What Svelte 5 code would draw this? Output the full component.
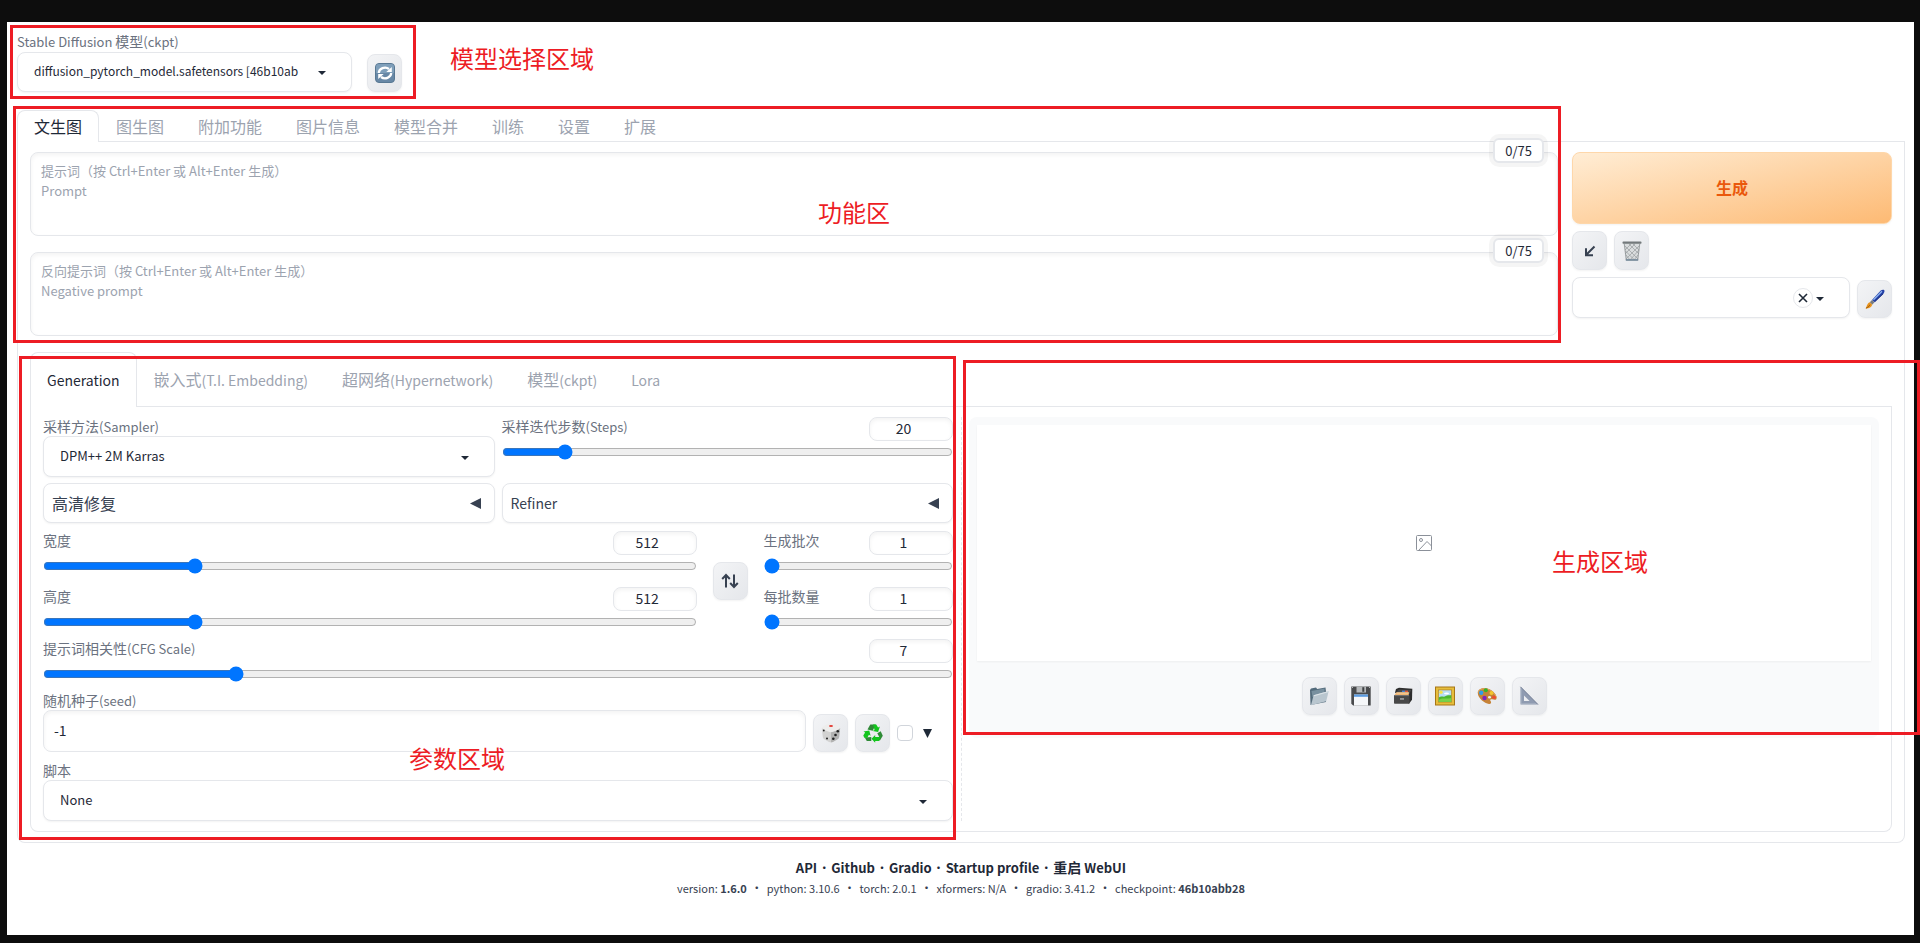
<script>
    let { version = '1.6.0' } = $props();

    let mainTab = $state('文生图');
    let subTab = $state('Generation');
    let steps = $state(20);
    let width = $state(512);
    let height = $state(512);
    let batchCount = $state(1);
    let batchSize = $state(1);
    let cfg = $state(7);
    let seed = $state('-1');

    const mainTabs = ['文生图', '图生图', '附加功能', '图片信息', '模型合并', '训练', '设置', '扩展'];
    const subTabs = ['Generation', '嵌入式(T.I. Embedding)', '超网络(Hypernetwork)', '模型(ckpt)', 'Lora'];
    const outputTools = ['folder', 'floppy', 'cardbox', 'frame', 'palette', 'ruler'];
    const links = ['API', 'Github', 'Gradio', 'Startup profile', '重启 WebUI'];
    const prompts = [
        { id: 'prompt', text: '提示词（按 Ctrl+Enter 或 Alt+Enter 生成）\nPrompt' },
        { id: 'negative', text: '反向提示词（按 Ctrl+Enter 或 Alt+Enter 生成）\nNegative prompt' }
    ];

    // latin letters run large next to the hanzi, so they get their own size
    function runs(text) {
        return text.match(/[ -~]+|[^ -~]+/g);
    }

    function swapSize() {
        [width, height] = [height, width];
    }
</script>

{#snippet mixed(text)}{#each runs(text) as run}<span class:latin={/[ -~]/.test(run)}>{run}</span>{/each}{/snippet}

{#snippet caret()}
    <svg class="caret" viewBox="0 0 18 18" aria-hidden="true"><path d="M5 8l4 4 4-4z" /></svg>
{/snippet}

{#snippet icon(name)}
    <svg class="icon" viewBox="0 0 20 20" aria-hidden="true">
        {#if name === 'refresh'}
            <rect x="0.5" y="0.5" width="19" height="19" rx="3.5" fill="#6888a6" stroke="#587893" />
            <path d="M1 10V4a3 3 0 0 1 3-3h12a3 3 0 0 1 3 3v6z" fill="#7f9fba" />
            <path d="M3.8 10A6.200 5.500 0 0 1 14 6" fill="none" stroke="#fff" stroke-width="2.300" />
            <path d="M16.200 10A6.200 5.500 0 0 1 6 14" fill="none" stroke="#fff" stroke-width="2.300" />
            <path d="M16.800 4v5h-5.500zM3.200 16v-5h5.500z" fill="#fff" />
        {:else if name === 'arrow'}
            <path d="M14.5 5.5L6 14M6 7.2V14.2h7" fill="none" stroke="#374151" stroke-width="2" />
        {:else if name === 'trash'}
            <path d="M1.5 2h17l-2.3 17.5H3.8z" fill="#d9dcdd" />
            <path d="M3 5l13 13M7 3l10 10M11 3l6 6M3.5 10l9 9M4 14l4 5M17 5L4 18M13 3L3 13M9 3L3 9M17 9l-9 10M16 14l-4 5" stroke="#969b9d" stroke-width="0.7" />
            <path d="M2.3 3l2 16h11.4l2-16" fill="none" stroke="#8b9193" stroke-width="0.8" />
            <rect x="0.5" y="0.5" width="19" height="2.2" rx="0.8" fill="#73797b" />
            <path d="M3.8 18.2h12.4v1.5H3.8z" fill="#71889b" />
        {:else if name === 'brush'}
            <path d="M7 11L15.5 1.8c1.5-1.4 4-1.6 4 0.2 0 1.3-1 2.8-2 3.8L9.5 13.3z" fill="#2441a8" />
            <path d="M8.5 10.8L17 2.3" stroke="#8fb3f0" stroke-width="1.3" />
            <path d="M10 12.5l8-7.7" stroke="#14246b" stroke-width="0.8" />
            <path d="M4.8 13.3L7 11l2.5 2.3-2.3 2.5z" fill="#777b80" />
            <path d="M4.8 13.3l2.4 2.5c-.4 2.5-3.4 3.8-6.7 3.6 1.4-1 1.2-5 4.3-6.1z" fill="#e8931c" />
            <path d="M1 19.2c2-.8 3-2 4-3.5" stroke="#8a4b06" stroke-width="0.8" fill="none" />
        {:else if name === 'swap'}
            <path d="M6 16.5V4M2.2 8L6 4l3.8 4M14 3.5V16M10.2 12l3.8 4 3.8-4" fill="none" stroke="#374151" stroke-width="2" />
        {:else if name === 'dice'}
            <path d="M0.800 5L10 9v10.500L8 19l-5.500-3.300L1.800 14z" fill="#d2d2d1" />
            <path d="M19.200 5L10 9v10.500l2-.5 5.500-3.300.7-1.700z" fill="#b3b3b2" />
            <path d="M0.800 5C1.500 3 7.500.5 10 .5S18.500 3 19.200 5C18 6.500 12 9.200 10 9.200S2 6.500.8 5z" fill="#ededec" />
            <ellipse cx="10" cy="3" rx="2" ry="1" fill="#e33a32" />
            <circle cx="2.800" cy="7.500" r="0.900" fill="#222" /><circle cx="6" cy="15.500" r="1" fill="#222" />
            <circle cx="12.300" cy="15.700" r="1.300" fill="#222" /><circle cx="14.500" cy="12" r="1.300" fill="#222" /><circle cx="16.800" cy="8.300" r="1.300" fill="#222" />
        {:else if name === 'recycle'}
            <path d="M4.500 6.500L7.300 1.600h5.500L9.700 7.700z" fill="#2f8a37" />
            <path d="M10 1.600h3.200l1.900 3 1.800-1-1.800 5.300-5.400-1 1.900-1z" fill="#12c51c" />
            <path d="M14.300 10.300l3.400-2 2.100 4.400-2.700 4.600h-3.600l3-2.800z" fill="#2f8a37" />
            <path d="M17.500 13.500l-1.300 4.400h-4v1.800L8.500 15.800l3.700-3.900v2h4z" fill="#12c51c" />
            <path d="M8.300 14v4H3.800L1.600 14.200h4z" fill="#2f8a37" />
            <path d="M1.300 14.800L.3 12.500l1.800-3L.5 8.500l5.800-1 1.300 5.300-1.700-1-1.600 3z" fill="#12c51c" />
        {:else if name === 'folder'}
            <path d="M1 4l1-1.500 5-1L8.200 3l8.300-1.500.5 4.500v10L1.500 19z" fill="#536b7b" />
            <path d="M2.500 5l13-2.500V8l-12 3z" fill="#78909f" />
            <path d="M4.600 9.200L19.700 5l-2.500 10.300L2 19.300z" fill="#b9c6cf" />
            <path d="M4.600 9.200L19.700 5l-.5 1.300L5 10.300z" fill="#dce4e8" />
        {:else if name === 'floppy'}
            <path d="M0.300.5h19.400v19.100H2.200L.3 17.800z" fill="#484a4c" />
            <rect x="5.500" y="0.500" width="9.500" height="6" fill="#b5b8ba" />
            <rect x="11.300" y="1.200" width="2" height="4.600" fill="#3e4042" />
            <rect x="3" y="8.500" width="14" height="11.100" fill="#f5f7f9" />
            <rect x="3" y="8.500" width="14" height="2.300" fill="#5b9be0" />
            <path d="M1 1.500h1M18 1.500h1" stroke="#bbb" />
        {:else if name === 'cardbox'}
            <path d="M2 6.500l1-3.500 3-1.200 13.300 1-.3 11-3 4z" fill="#2d2d2d" />
            <path d="M3.500 5.500L6 3.500l12 .5-1.500 4z" fill="#4a4a4a" />
            <path d="M9 5.300h3" stroke="#4a87d7" stroke-width="1.300" /><path d="M12 5.300h3" stroke="#e9573a" stroke-width="1.300" />
            <path d="M1.500 9l2-2.800h12.500L15.700 9z" fill="#f0b673" />
            <path d="M3.500 7h12" stroke="#fbdcae" stroke-width="0.800" />
            <rect x="1" y="9" width="15.500" height="8.800" rx="0.800" fill="#484848" />
            <path d="M1.500 9.600h14.500" stroke="#777" />
            <path d="M7 12.200h4v1.500H7z" fill="#aaa" />
        {:else if name === 'frame'}
            <rect x="0" y="0.500" width="20" height="19" fill="#a77616" />
            <rect x="1" y="1.500" width="18" height="17" fill="#e6bd3b" />
            <rect x="3" y="3.500" width="14" height="13" fill="#b88b25" />
            <rect x="3.800" y="4.300" width="12.400" height="11.400" fill="#b7dcf4" />
            <path d="M3.800 11.500c3-2 5 .3 7-1.500s4 0 5.400-1v6.700H3.800z" fill="#4cb72e" />
            <path d="M3.800 14c4-3 7-.5 12.400-2v3.700H3.800z" fill="#77d24a" />
            <circle cx="6" cy="6.300" r="1.700" fill="#f6e149" /><ellipse cx="11.500" cy="7.500" rx="2.500" ry="1" fill="#fff" />
        {:else if name === 'palette'}
            <path d="M1 5.500C2 1.800 8 1 12.500 3.200c4.500 2.200 7.700 6.300 7 9.300-.5 2.300-2.800 1-4.400.8-1.600-.2-2.400.6-1.500 1.800 1 1.300.5 3.100-1.600 2.800C7 17.200-.5 11 1 5.500z" fill="#c68237" />
            <path d="M1.300 6.500C1 3 8 1.500 12.500 4c4 2.200 7 5.800 6.700 8" fill="none" stroke="#e2a85c" />
            <circle cx="4.200" cy="6.700" r="2.200" fill="#2e9de8" /><circle cx="8.800" cy="4.300" r="2" fill="#31b42e" /><circle cx="14.500" cy="7" r="2" fill="#f1c72e" /><ellipse cx="17" cy="11.200" rx="2" ry="1.500" fill="#ef4c33" /><circle cx="7.500" cy="12" r="2.200" fill="#8421ba" />
            <ellipse cx="12.500" cy="11.300" rx="1.500" ry="1.200" fill="#eceef0" />
        {:else if name === 'ruler'}
            <path fill-rule="evenodd" d="M1.500.8L19 18.500H1.500zM5 9.500V15h5.600z" fill="#8f9bb1" />
            <path d="M1.500.8L19 18.500" stroke="#6f7b91" stroke-width="0.900" /><path d="M2 2.500v15.300h15" stroke="#b3bccb" fill="none" stroke-width="0.700" />
        {/if}
    </svg>
{/snippet}

<main class="app">
    <header class="quicksettings">
        <div class="field checkpoint">
            <label for="ckpt">{@render mixed('Stable Diffusion 模型(ckpt)')}</label>
            <div class="dropdown">
                <select id="ckpt">
                    <option>diffusion_pytorch_model.safetensors [46b10ab</option>
                </select>
                {@render caret()}
            </div>
        </div>
        <button class="tool" aria-label="Refresh">{@render icon('refresh')}</button>
    </header>

    <nav class="tabs main-tabs">
        {#each mainTabs as tab}
            <button class:selected={tab === mainTab} onclick={() => (mainTab = tab)}>{tab}</button>
        {/each}
    </nav>

    <section class="panel outer">
        <div class="toprow">
            <div class="prompts">
                {#each prompts as p}
                    <div class="prompt">
                        <textarea id={p.id} aria-label={p.id} placeholder={p.text}></textarea>
                        <span class="counter">0/75</span>
                    </div>
                {/each}
            </div>
            <div class="actions">
                <button class="generate">生成</button>
                <div class="row">
                    <button class="tool tall" aria-label="Paste">{@render icon('arrow')}</button>
                    <button class="tool tall" aria-label="Clear">{@render icon('trash')}</button>
                </div>
                <div class="row">
                    <div class="dropdown styles">
                        <select aria-label="Styles"><option></option></select>
                        <button class="clear" aria-label="Remove styles">
                            <svg viewBox="0 0 10 10"><path d="M1 1l8 8M9 1l-8 8" /></svg>
                        </button>
                        {@render caret()}
                    </div>
                    <button class="tool" aria-label="Edit styles">{@render icon('brush')}</button>
                </div>
            </div>
        </div>

        <nav class="tabs sub-tabs">
            {#each subTabs as tab}
                <button class:selected={tab === subTab} onclick={() => (subTab = tab)}>{@render mixed(tab)}</button>
            {/each}
        </nav>

        <div class="panel inner">
            <div class="settings">
                <div class="pair">
                    <div class="field">
                        <label for="sampler">{@render mixed('采样方法(Sampler)')}</label>
                        <div class="dropdown">
                            <select id="sampler"><option>DPM++ 2M Karras</option></select>
                            {@render caret()}
                        </div>
                    </div>
                    <div class="slider">
                        <label for="steps">{@render mixed('采样迭代步数(Steps)')}</label>
                        <input type="number" aria-label="Steps" bind:value={steps} />
                        <input type="range" id="steps" min="1" max="150" bind:value={steps} />
                    </div>
                </div>

                <div class="pair">
                    <button class="accordion"><span>高清修复</span><svg viewBox="0 0 10 10"><path d="M10 0v10L0 5z" /></svg></button>
                    <button class="accordion"><span class="latin">Refiner</span><svg viewBox="0 0 10 10"><path d="M10 0v10L0 5z" /></svg></button>
                </div>

                <div class="sizes">
                    <div class="stack">
                        <div class="slider">
                            <label for="width">宽度</label>
                            <input type="number" aria-label="Width" bind:value={width} />
                            <input type="range" id="width" min="64" max="2048" step="8" bind:value={width} />
                        </div>
                        <div class="slider">
                            <label for="height">高度</label>
                            <input type="number" aria-label="Height" bind:value={height} />
                            <input type="range" id="height" min="64" max="2048" step="8" bind:value={height} />
                        </div>
                    </div>
                    <button class="tool" aria-label="Swap width and height" onclick={swapSize}>{@render icon('swap')}</button>
                    <div class="stack">
                        <div class="slider">
                            <label for="count">生成批次</label>
                            <input type="number" aria-label="Batch count" bind:value={batchCount} />
                            <input type="range" id="count" min="1" max="100" bind:value={batchCount} />
                        </div>
                        <div class="slider">
                            <label for="size">每批数量</label>
                            <input type="number" aria-label="Batch size" bind:value={batchSize} />
                            <input type="range" id="size" min="1" max="8" bind:value={batchSize} />
                        </div>
                    </div>
                </div>

                <div class="slider">
                    <label for="cfg">{@render mixed('提示词相关性(CFG Scale)')}</label>
                    <input type="number" aria-label="CFG Scale" bind:value={cfg} />
                    <input type="range" id="cfg" min="1" max="30" step="0.5" bind:value={cfg} />
                </div>

                <div class="seed">
                    <div class="field">
                        <label for="seed">{@render mixed('随机种子(seed)')}</label>
                        <input type="text" id="seed" bind:value={seed} />
                    </div>
                    <button class="tool" aria-label="Random seed">{@render icon('dice')}</button>
                    <button class="tool" aria-label="Reuse seed">{@render icon('recycle')}</button>
                    <label class="extra">
                        <input type="checkbox" aria-label="Extra" />
                        <svg viewBox="0 0 10 10"><path d="M0 0h10L5 10z" /></svg>
                    </label>
                </div>

                <div class="field">
                    <label for="script">脚本</label>
                    <div class="dropdown">
                        <select id="script"><option>None</option></select>
                        {@render caret()}
                    </div>
                </div>
            </div>

            <div class="gutter"></div>

            <div class="results">
                <div class="gallery">
                    <svg viewBox="0 0 16 16" aria-label="Empty gallery">
                        <rect x="0.500" y="0.500" width="15" height="15" rx="1" />
                        <circle cx="5" cy="5" r="1.500" />
                        <path d="M2.500 15.500L11 6.500l4.500 4.500" />
                    </svg>
                </div>
                <div class="row output-tools">
                    {#each outputTools as name}
                        <button class="tool" aria-label={name}>{@render icon(name)}</button>
                    {/each}
                </div>
            </div>
        </div>
    </section>

    <footer>
        <div class="links">
            {#each links as link, i}{#if i}<i>·</i>{/if}<a href="#{i}">{@render mixed(link)}</a>{/each}
        </div>
        <div class="versions">
            <span>version: <b>{version}</b></span>
            <i>•</i><span>python: 3.10.6</span>
            <i>•</i><span>torch: 2.0.1</span>
            <i>•</i><span>xformers: N/A</span>
            <i>•</i><span>gradio: 3.41.2</span>
            <i>•</i><span>checkpoint: <b>46b10abb28</b></span>
        </div>
    </footer>

    <!-- region annotations, laid over the page -->
    <div class="region model"></div>
    <div class="region function"></div>
    <div class="region params"></div>
    <div class="region output"></div>
    <span class="note model-note">模型选择区域</span>
    <span class="note function-note">功能区</span>
    <span class="note params-note">参数区域</span>
    <span class="note output-note">生成区域</span>
</main>

<style>
:global(body) {
    margin: 0;
    background: #0d0d0d;
}
* {
    box-sizing: border-box;
}
.app {
    position: relative;
    margin: 22px 6px 8px 7px;
    padding: 9px 9px 37px 10px;
    background: #fff;
    color: #1f2937;
    font-family: "Noto Sans CJK SC", "Noto Sans", sans-serif;
    font-size: 14px;
    line-height: 20px;
}
button, input, select, textarea {
    font: inherit;
    color: inherit;
    margin: 0;
}
button {
    cursor: pointer;
    padding: 0;
}
.latin {
    font-size: 13px;
    white-space: pre;
}
.row {
    display: flex;
    align-items: flex-end;
    gap: 7px;
}

/* fields */
.field {
    display: flex;
    flex-direction: column;
    flex: 1;
    min-width: 0;
}
.field label, .slider label {
    color: #6b7280;
    line-height: 18px;
    height: 19px;
    white-space: nowrap;
}
.dropdown {
    display: flex;
    align-items: center;
    height: 41px;
    border: 1px solid #e5e7eb;
    border-radius: 8px;
    background: #fff;
    box-shadow: 0 1px 2px rgba(0, 0, 0, 0.05);
}
.dropdown select {
    flex: 1;
    min-width: 0;
    height: 100%;
    padding: 0 0 2px 16px;
    border: 0;
    background: none;
    font-size: 13px;
    appearance: none;
    outline: none;
}
.caret {
    flex: none;
    width: 18px;
    height: 18px;
    margin-right: 20px;
    fill: #1f2937;
}
.tool {
    display: flex;
    flex: none;
    align-items: center;
    justify-content: center;
    width: 35px;
    height: 38px;
    border: 1px solid #e5e7eb;
    border-radius: 8px;
    background: linear-gradient(to bottom right, #f3f4f6, #e5e7eb);
    box-shadow: 0 1px 2px rgba(0, 0, 0, 0.05);
}
.tool.tall {
    height: 39px;
}
.icon {
    width: 20px;
    height: 20px;
}
textarea, input[type="number"], input[type="text"] {
    border: 1px solid #e5e7eb;
    border-radius: 8px;
    background: #fff;
    box-shadow: inset 0 2px 4px rgba(0, 0, 0, 0.05);
    outline: none;
}

.quicksettings {
    display: flex;
    align-items: flex-end;
    gap: 15px;
    margin-bottom: 18px;
}
.checkpoint {
    flex: 0 1 335px;
}
.checkpoint label {
    height: 21px;
    line-height: 20px;
}
.checkpoint .dropdown {
    height: 40px;
}
.checkpoint select {
    font-size: 12px;
}

/* tabs */
.tabs {
    display: flex;
    border-bottom: 1px solid #e5e7eb;
}
.tabs button {
    margin-bottom: -1px;
    padding: 0 16px 2px;
    border: 1px solid transparent;
    border-bottom: 0;
    border-radius: 8px 8px 0 0;
    background: none;
    color: #9ca3af;
    font-size: 16px;
    line-height: 24px;
}
.tabs .selected {
    border-color: #e5e7eb;
    background: #fff;
    color: #1f2937;
}
.tabs .latin, .accordion .latin {
    font-size: 14px;
}
.main-tabs button {
    height: 32px;
}
.sub-tabs button {
    height: 55px;
}
.panel {
    border: 1px solid #e5e7eb;
    border-top: 0;
    border-radius: 0 0 8px 8px;
}
.outer {
    padding: 10px 12px;
}

/* prompts and actions */
.toprow {
    display: flex;
    gap: 14px;
    margin-bottom: 16px;
}
.prompts {
    display: flex;
    flex: 6 1 0;
    flex-direction: column;
    gap: 16px;
}
.prompt {
    position: relative;
    display: flex;
}
textarea {
    flex: 1;
    height: 84px;
    padding: 8px 10px;
    font-size: 13px;
    resize: none;
}
textarea::placeholder {
    color: #9ca3af;
}
.counter {
    position: absolute;
    top: -14px;
    right: 14px;
    padding: 0 10px;
    border: 2px solid #e5e7eb;
    border-radius: 6px;
    background: #fff;
    font-size: 13px;
    line-height: 21px;
    box-shadow: 0 0 0 4px rgba(0, 0, 0, 0.04);
}
.actions {
    display: flex;
    flex: 1 1 0;
    min-width: 320px;
    flex-direction: column;
    gap: 7px;
}
.generate {
    height: 72px;
    padding-bottom: 2px;
    border: 1px solid #fed7aa;
    border-radius: 8px;
    background: linear-gradient(to bottom right, #ffedd5, #fdba74);
    box-shadow: 0 1px 2px rgba(0, 0, 0, 0.05);
    color: #ea580c;
    font-size: 16px;
    font-weight: 600;
}
.styles {
    flex: 1;
}
.clear {
    display: flex;
    align-items: center;
    justify-content: center;
    width: 20px;
    height: 20px;
    border: 1px solid #e5e7eb;
    border-radius: 50%;
    background: #fff;
}
.clear + .caret {
    margin-left: -2px;
}
.clear svg {
    width: 10px;
    height: 10px;
    stroke: #1f2937;
    stroke-width: 1.600;
}

/* generation settings */
.inner {
    display: grid;
    grid-template-columns: minmax(0, 1fr) 16px minmax(0, 1fr);
    padding: 10px 12px;
}
.settings {
    display: flex;
    flex-direction: column;
    gap: 9px;
}
.pair {
    display: grid;
    grid-template-columns: 1fr 1fr;
    gap: 7px;
}
.pair + .pair {
    margin: -3px 0 -1px;
}
.slider {
    display: grid;
    grid-template-columns: minmax(0, 1fr) 84px;
    grid-template-rows: 24px 16px;
    row-gap: 3px;
}
.slider input[type="number"] {
    min-width: 0;
    padding: 0 8px 2px;
    text-align: center;
}
input[type="range"] {
    grid-column: 1 / -1;
    width: auto;
    height: 16px;
    margin: 0;
    accent-color: #0075ff;
}
.accordion {
    display: flex;
    align-items: center;
    justify-content: space-between;
    height: 40px;
    padding: 0 13px 0 8px;
    border: 1px solid #e5e7eb;
    border-radius: 8px;
    background: #fff;
    box-shadow: 0 1px 2px rgba(0, 0, 0, 0.05);
    color: #374151;
    font-size: 16px;
}
.accordion svg {
    width: 11px;
    height: 11px;
    fill: #374151;
}
.sizes {
    display: grid;
    grid-template-columns: minmax(0, 3.45fr) 35px minmax(0, 1fr);
    align-items: center;
    gap: 16px;
}
.stack {
    display: grid;
    gap: 13px;
}
.seed {
    display: flex;
    align-items: flex-end;
    gap: 7px;
}
#seed {
    height: 42px;
    padding: 0 10px 2px;
}
.extra {
    display: flex;
    align-items: center;
    gap: 10px;
    height: 38px;
    padding-right: 21px;
}
.extra input {
    width: 16px;
    height: 16px;
    border: 1px solid #d1d5db;
    border-radius: 4px;
    background: #fff;
    appearance: none;
}
.extra svg {
    width: 9px;
    height: 9px;
    fill: #1f2937;
}
.gutter {
    justify-self: center;
    border-left: 1px dashed #e5e7eb;
}

/* results */
.results {
    align-self: start;
    border-radius: 8px;
    background: #f9fafb;
    padding: 8px;
}
.gallery {
    display: flex;
    align-items: center;
    justify-content: center;
    height: 236px;
    background: #fff;
    box-shadow: 0 1px 2px rgba(0, 0, 0, 0.05);
}
.gallery svg {
    width: 16px;
    height: 16px;
    fill: none;
    stroke: #8b9099;
}
.output-tools {
    justify-content: center;
    padding: 16px 0 15px;
}

footer {
    margin-top: 14px;
    text-align: center;
}
footer i {
    font-style: normal;
}
.links a {
    color: inherit;
    font-weight: 600;
    text-decoration: none;
}
.links, .versions {
    display: flex;
    justify-content: center;
}
.links {
    line-height: 21px;
}
.links i {
    width: 14px;
    font-size: 12px;
}
.versions {
    color: #374151;
    font-size: 11px;
}
.versions i {
    width: 20px;
    font-size: 12px;
}

/* annotations */
.region {
    position: absolute;
    border: 3px solid #ed1c24;
    pointer-events: none;
}
.model {
    top: 3px;
    left: 3px;
    width: 406px;
    height: 74px;
}
.function {
    top: 84px;
    left: 6px;
    right: 353px;
    height: 237px;
}
.params {
    top: 334px;
    left: 12px;
    right: 958px;
    height: 484px;
}
.output {
    top: 338px;
    left: calc(50% + 2px);
    right: -6px;
    height: 375px;
}
.note {
    position: absolute;
    color: #ed1c24;
    font-size: 24px;
    line-height: 32px;
    pointer-events: none;
}
.model-note {
    top: 20px;
    left: 443px;
}
.function-note {
    top: 174px;
    left: 811px;
}
.params-note {
    top: 720px;
    left: 402px;
}
.output-note {
    top: 523px;
    right: 266px;
}
</style>
